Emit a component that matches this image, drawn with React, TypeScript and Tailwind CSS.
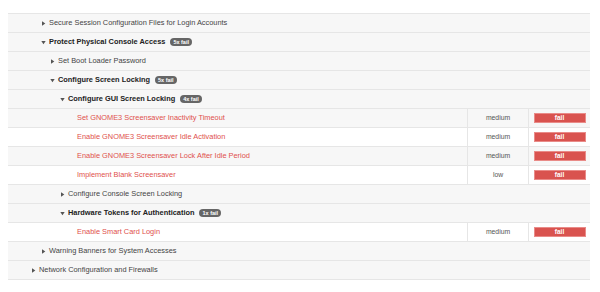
import React from "react"

type Row =
  | { kind: "group"; title: string; level: number; open: boolean; fails?: number }
  | { kind: "rule"; title: string; level: number; severity: string; striped: boolean }

const rows: Row[] = [
  { kind: "group", title: "Secure Session Configuration Files for Login Accounts", level: 1, open: false },
  { kind: "group", title: "Protect Physical Console Access", level: 1, open: true, fails: 5 },
  { kind: "group", title: "Set Boot Loader Password", level: 2, open: false },
  { kind: "group", title: "Configure Screen Locking", level: 2, open: true, fails: 5 },
  { kind: "group", title: "Configure GUI Screen Locking", level: 3, open: true, fails: 4 },
  { kind: "rule", title: "Set GNOME3 Screensaver Inactivity Timeout", level: 4, severity: "medium", striped: true },
  { kind: "rule", title: "Enable GNOME3 Screensaver Idle Activation", level: 4, severity: "medium", striped: false },
  { kind: "rule", title: "Enable GNOME3 Screensaver Lock After Idle Period", level: 4, severity: "medium", striped: true },
  { kind: "rule", title: "Implement Blank Screensaver", level: 4, severity: "low", striped: false },
  { kind: "group", title: "Configure Console Screen Locking", level: 3, open: false },
  { kind: "group", title: "Hardware Tokens for Authentication", level: 3, open: true, fails: 1 },
  { kind: "rule", title: "Enable Smart Card Login", level: 4, severity: "medium", striped: false },
  { kind: "group", title: "Warning Banners for System Accesses", level: 1, open: false },
  { kind: "group", title: "Network Configuration and Firewalls", level: 0, open: false },
]

// left offset of the arrow for each nesting level
const indent = ["pl-[23px]", "pl-[33px]", "pl-[42px]", "pl-[52px]", "pl-[69px]"]

function Arrow({ open }: { open: boolean }) {
  return open ? (
    <svg width="5" height="5" viewBox="0 0 5 5" className="shrink-0">
      <path d="M0.3 1 L4.7 1 L2.5 4.3 Z" fill="#555" />
    </svg>
  ) : (
    <svg width="5" height="5" viewBox="0 0 5 5" className="shrink-0">
      <path d="M1 0.3 L4.3 2.5 L1 4.7 Z" fill="#555" />
    </svg>
  )
}

export default function App() {
  return (
    <div
      className="w-[600px] h-[292px] bg-white pt-[13px] pl-[8px]"
      style={{ fontFamily: '"Liberation Sans", Arial, sans-serif' }}
    >
      <div className="w-[582px] border-t border-[#e6e6e6]">
        {rows.map((row, i) =>
          row.kind === "group" ? (
            <div
              key={i}
              className={`h-[19px] flex items-center gap-[3px] bg-[#f7f7f7] border-b border-[#e6e6e6] ${indent[row.level]}`}
            >
              <Arrow open={row.open} />
              <span
                className={`text-[7.4px] leading-none whitespace-nowrap ${
                  row.open ? "font-bold text-[#222]" : "text-[#444]"
                }`}
              >
                {row.title}
              </span>
              {row.fails && (
                <span className="ml-[2px] h-[8px] px-[3px] rounded-full bg-[#666] text-white text-[5.5px] font-bold leading-[8px]">
                  {row.fails}x fail
                </span>
              )}
            </div>
          ) : (
            <div
              key={i}
              className={`h-[19px] flex border-b border-[#e6e6e6] ${row.striped ? "bg-[#f7f7f7]" : "bg-white"}`}
            >
              <div className={`flex-1 flex items-center ${indent[row.level]}`}>
                <span className="text-[7.4px] leading-none text-[#e0504c] whitespace-nowrap">{row.title}</span>
              </div>
              <div className="w-[61px] border-l border-[#e6e6e6] flex items-center justify-center text-[6.8px] text-[#555]">
                {row.severity}
              </div>
              <div className="w-[62px] border-l border-[#e6e6e6] flex items-center justify-center">
                <span className="w-[52px] h-[10px] bg-[#d9534f] border border-[#e98b88] text-white text-[6.5px] font-bold leading-[8px] text-center">
                  fail
                </span>
              </div>
            </div>
          )
        )}
      </div>
    </div>
  )
}
